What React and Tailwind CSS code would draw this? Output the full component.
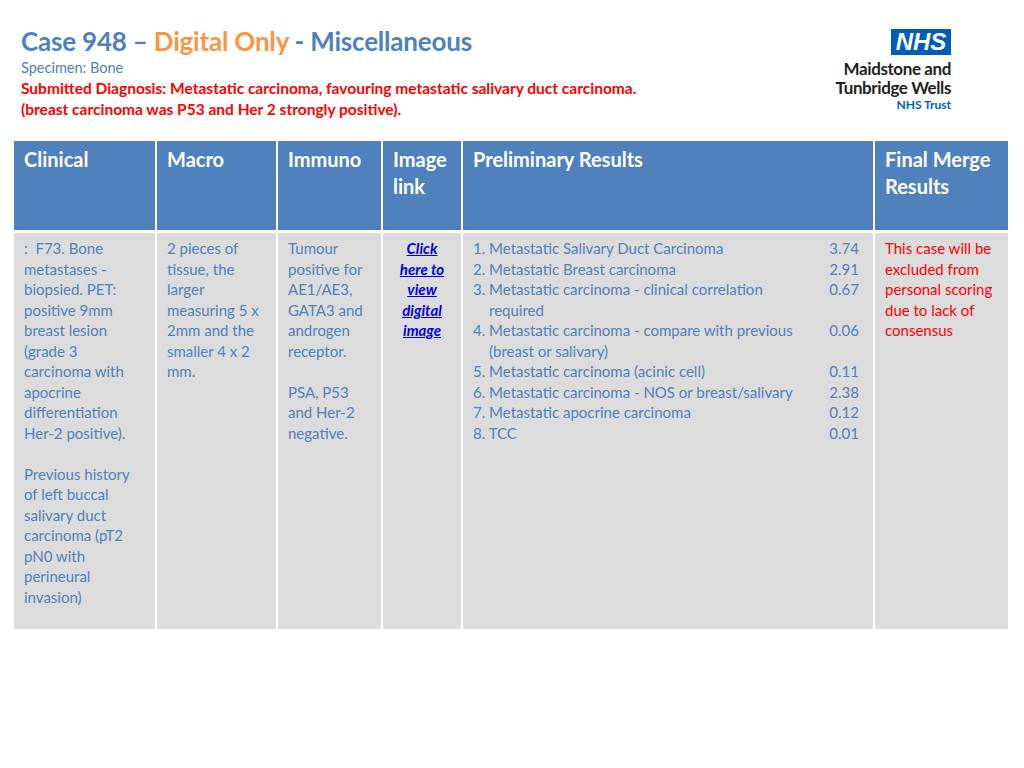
const results = [
  ['1. Metastatic Salivary Duct Carcinoma', null, '3.74'],
  ['2. Metastatic Breast carcinoma', null, '2.91'],
  ['3. Metastatic carcinoma - clinical correlation', 'required', '0.67'],
  ['4. Metastatic carcinoma - compare with previous', '(breast or salivary)', '0.06'],
  ['5. Metastatic carcinoma (acinic cell)', null, '0.11'],
  ['6. Metastatic carcinoma - NOS or breast/salivary', null, '2.38'],
  ['7. Metastatic apocrine carcinoma', null, '0.12'],
  ['8. TCC', null, '0.01'],
]

const cols = 'grid grid-cols-[141px_119px_103px_78px_410px_133px] gap-x-[2px]'

export default function App() {
  return (
    <div className="relative h-[768px] w-[1024px] bg-white" style={{ fontFamily: 'Lato, "Open Sans", sans-serif' }}>
      <div className="flex justify-between pl-[21px] pr-[73px] pt-[24px]">
        <div>
          <h1 className="text-[26px] font-bold leading-[34px] tracking-[-0.2px] text-[#4f81bd]">
            Case 948 – <span className="text-[#f79646]">Digital Only</span> - Miscellaneous
          </h1>
          <div className="text-[14.5px] leading-[20px] text-[#4f81bd]">Specimen: Bone</div>
          <div className="text-[15.5px] font-bold leading-[21px] text-[#ff0000]">
            Submitted Diagnosis: Metastatic carcinoma, favouring metastatic salivary duct carcinoma.
            <br />
            (breast carcinoma was P53 and Her 2 strongly positive).
          </div>
        </div>
        <div className="flex flex-col items-end pt-[5px]">
          <div className="w-[60px] bg-[#005eb8] text-center text-[24px] font-black italic leading-[26px] text-white" style={{ fontFamily: '"Liberation Sans", sans-serif' }}>NHS</div>
          <div className="mt-[4px] text-right text-[17px] font-bold leading-[19px] tracking-[-0.4px] text-[#231f20]">
            Maidstone and<br />Tunbridge Wells
          </div>
          <div className="text-[12px] font-bold leading-[15px] text-[#005eb8]">NHS Trust</div>
        </div>
      </div>

      <div className="ml-[14px] mt-[21px] w-[994px] bg-white">
        <div className={`${cols} h-[89px] text-[20px] font-bold leading-[27px] text-white`}>
          {['Clinical', 'Macro', 'Immuno', 'Image link', 'Preliminary Results', 'Final Merge Results'].map((h) => (
            <div key={h} className="bg-[#4f81bd] px-[10px] pt-[5px]">{h}</div>
          ))}
        </div>
        <div className={`${cols} mt-[3px] h-[396px] text-[15px] leading-[20.5px] text-[#4f81bd]`}>
          <div className="bg-[#dcdcdc] px-[10px] pt-[5px]">
            : &nbsp;F73. Bone metastases - biopsied. PET: positive 9mm breast lesion (grade 3 carcinoma with apocrine differentiation Her-2 positive).
            <div className="h-[20.5px]" />
            Previous history of left buccal salivary duct carcinoma (pT2 pN0 with perineural invasion)
          </div>
          <div className="bg-[#dcdcdc] px-[10px] pt-[5px]">
            2 pieces of tissue, the larger measuring 5 x 2mm and the smaller 4 x 2 mm.
          </div>
          <div className="bg-[#dcdcdc] px-[10px] pt-[5px]">
            Tumour positive for AE1/AE3, GATA3 and androgen receptor.
            <div className="h-[20.5px]" />
            PSA, P53 and Her-2 negative.
          </div>
          <div className="bg-[#dcdcdc] px-[12px] pt-[5px] text-center font-bold italic text-[#0000ee] underline">
            Click here to view digital image
          </div>
          <div className="bg-[#dcdcdc] pl-[10px] pr-[14px] pt-[5px]">
            {results.map(([a, b, n]) => (
              <div key={a} className="flex justify-between">
                <div>
                  {a}
                  {b && <div className="pl-[16px]">{b}</div>}
                </div>
                <div>{n}</div>
              </div>
            ))}
          </div>
          <div className="bg-[#dcdcdc] px-[10px] pt-[5px] text-[#ff0000]">
            This case will be excluded from personal scoring due to lack of consensus
          </div>
        </div>
      </div>
    </div>
  )
}
